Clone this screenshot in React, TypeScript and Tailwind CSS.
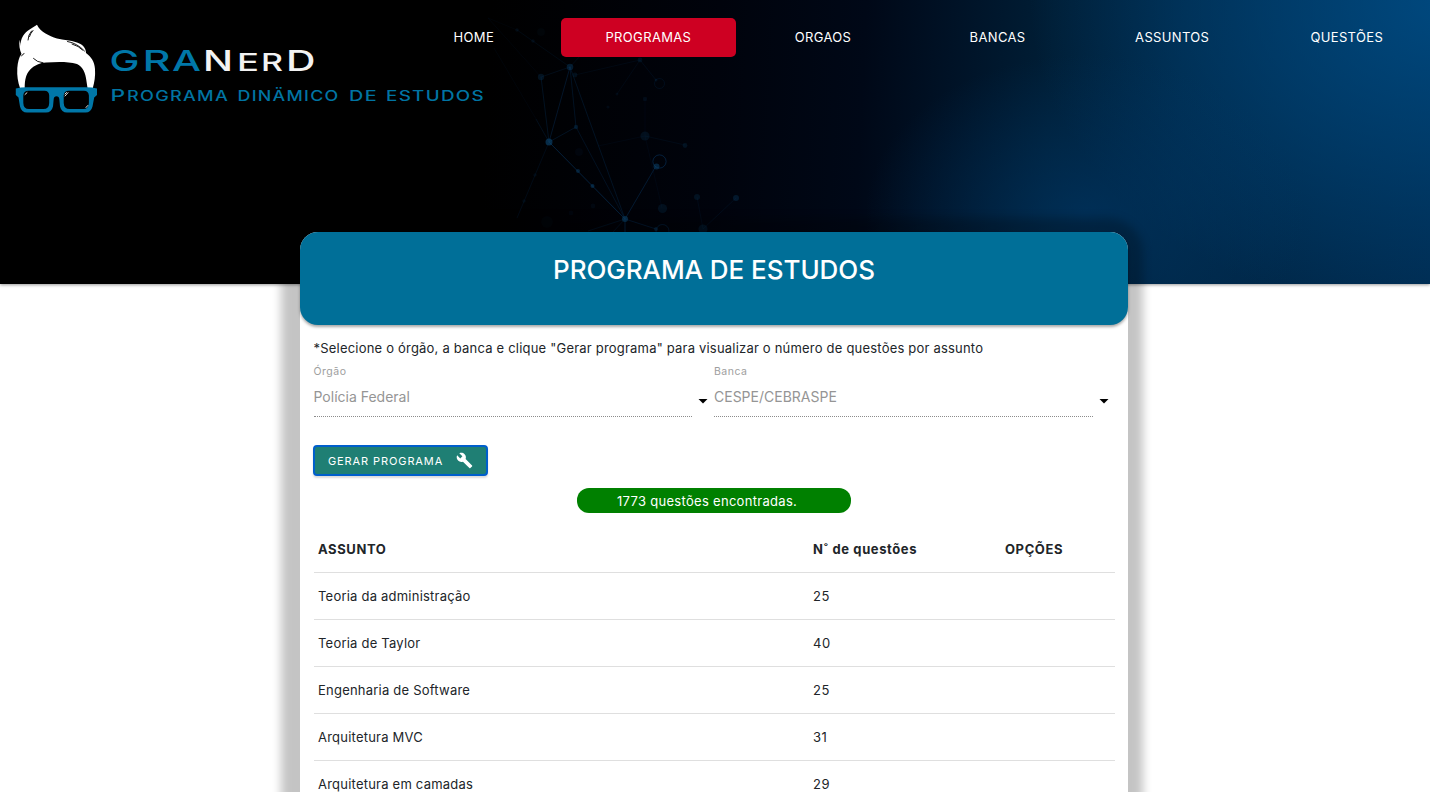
import React from 'react';

const navItems = ['HOME', 'PROGRAMAS', 'ORGAOS', 'BANCAS', 'ASSUNTOS', 'QUESTÕES'];

const subjects = [
  { name: 'Teoria da administração', count: 25 },
  { name: 'Teoria de Taylor', count: 40 },
  { name: 'Engenharia de Software', count: 25 },
  { name: 'Arquitetura MVC', count: 31 },
  { name: 'Arquitetura em camadas', count: 29 },
];

type Node = [x: number, y: number, r: number, opacity: number];
type Edge = [x1: number, y1: number, x2: number, y2: number, opacity: number];

const nodes: Node[] = [
  [570, 67, 3.3, 0.6],
  [541, 77, 3.2, 0.4],
  [575, 75, 2.4, 0.3],
  [549, 142, 3.5, 0.95],
  [576, 127, 2.2, 0.5],
  [578, 171, 2, 0.7],
  [592.5, 186, 2, 0.8],
  [625, 219, 3, 0.95],
  [656.5, 166.5, 3, 0.8],
  [645, 136, 4.6, 0.3],
  [645, 99, 2.2, 0.25],
  [685, 145.5, 2.4, 0.35],
  [662.5, 208.5, 4.6, 0.3],
  [697, 197, 3, 0.35],
  [736, 198, 3, 0.5],
  [703, 229, 4.6, 0.35],
  [656, 229, 2, 0.6],
  [640, 60, 2.4, 0.3],
  [656, 80, 1.5, 0.3],
  [608, 107, 1.6, 0.2],
  [517, 30, 1.8, 0.25],
  [533, 41, 1.8, 0.25],
  [541, 32, 4, 0.1],
  [535, 175, 1.8, 0.2],
  [524, 201, 1.8, 0.2],
  [579, 152, 4, 0.12],
  [593, 206, 2.4, 0.15],
  [571, 213, 2.4, 0.12],
  [547, 222, 6, 0.08],
  [617, 94, 1.5, 0.2],
];

const edges: Edge[] = [
  [517, 30, 570, 67, 0.25],
  [488, 18, 517, 30, 0.12],
  [488, 18, 541, 77, 0.15],
  [541, 77, 570, 67, 0.35],
  [541, 77, 549, 142, 0.5],
  [570, 67, 549, 142, 0.6],
  [570, 67, 576, 127, 0.5],
  [570, 67, 625, 219, 0.5],
  [549, 142, 576, 127, 0.5],
  [576, 127, 625, 219, 0.45],
  [549, 142, 625, 219, 0.9],
  [625, 219, 656, 166, 0.7],
  [625, 219, 656, 229, 0.6],
  [625, 219, 588, 231, 0.4],
  [625, 219, 613, 232, 0.4],
  [625, 219, 625, 234, 0.9],
  [549, 142, 517, 218, 0.3],
  [549, 142, 536, 119, 0.4],
  [536, 119, 494, 48, 0.15],
  [575, 75, 640, 60, 0.2],
  [640, 60, 656, 80, 0.25],
  [640, 60, 617, 94, 0.2],
  [645, 99, 645, 136, 0.15],
  [645, 136, 685, 145, 0.22],
  [645, 136, 598, 146, 0.15],
  [645, 136, 662, 208, 0.15],
  [697, 197, 703, 229, 0.2],
  [736, 198, 703, 229, 0.25],
  [570, 67, 580, 56, 0.25],
];

function NetworkArt() {
  return (
    <svg className="absolute left-0 top-0" width="1430" height="284" viewBox="0 0 1430 284" aria-hidden="true">
      <g stroke="#073765" strokeWidth="1" fill="none">
        {edges.map(([x1, y1, x2, y2, o], i) => (
          <line key={i} x1={x1} y1={y1} x2={x2} y2={y2} opacity={o * 0.62} />
        ))}
        <circle cx="659.5" cy="161.5" r="6.6" opacity="0.55" />
        <circle cx="659.5" cy="83.5" r="5" opacity="0.2" />
        <circle cx="662.5" cy="231" r="6.5" opacity="0.4" />
      </g>
      <g fill="#0a4068">
        {nodes.map(([x, y, r, o], i) => (
          <circle key={i} cx={x} cy={y} r={r} opacity={o * 0.7} />
        ))}
      </g>
    </svg>
  );
}

function Logo() {
  return (
    <svg className="block shrink-0" width="500" height="130" viewBox="0 0 500 130" role="img" aria-label="GRANerD">
      <path
        fill="#fff"
        d="M37 24.800C32 28 26 31 23 36C21 39.500 20.300 43 20.500 46L19.700 39.500C18.700 45 19.700 50 21.500 54C19 57 17.800 62 17.300 68C16.800 76 18 82 20 88H24.700C24.700 80 26 74 30 69.800C35 65 40 63 46 62.600C56 62 68 61.500 77 64C83 67 85.500 73 86.300 80L87.500 88H92.800C94.500 82 95.500 76 95 69C94.500 61 91 57 86 53C86 47.500 82 44 77 42.500C70 40 64 40.500 57 38.500C49 36.200 40 31.500 37 24.800Z"
      />
      <path
        fill="none"
        stroke="#000"
        strokeWidth="0.9"
        strokeLinecap="round"
        d="M31.500 31Q28 35 28 40M33 30.500Q30 34 29.500 36.500M67.500 41.500Q77 43 84.500 51M72 44Q79 46 82.500 50M33.500 58.500Q37 62.300 43 62.800M21.500 56Q23 53.500 24 53.500"
      />
      <path
        fill="#0077a8"
        fillRule="evenodd"
        d="M15.800 88.500Q22 86.800 30 87.300H82Q91 86.800 97 88.500V95L94.200 97.500L92.500 106.500Q91 112.500 85.500 112.500H67Q61.500 112.500 60 106.500L59.300 99Q59 96.300 56.500 96.300T53.700 99L53 106.500Q51.500 112.500 46 112.500H27Q21.500 112.500 20 106.500L18.500 97.500L15.800 95ZM28.500 90.700Q23.500 90.700 23.300 95.500V103Q23.500 109 29 109H43.500Q49 109 49.200 103V95.500Q49 90.700 44.500 90.700ZM69 90.700Q64 90.700 63.700 95.500V103Q64 109 69.500 109H83.500Q88.500 109 88.900 103V95.500Q88.500 90.700 84 90.700Z"
      />
      <path
        fill="none"
        stroke="#fff"
        strokeWidth="0.9"
        strokeLinecap="round"
        d="M25 94.500L27 92.700M65 96L68 92.700M65 94L66.500 92.500M86 107.500L87.800 105.500"
      />
      <g className="font-['Inter',sans-serif]">
        <g fill="#0077a8" fontSize="29" fontWeight="500">
          <text x="109.500" y="70.800" textLength="30" lengthAdjust="spacingAndGlyphs">G</text>
          <text x="142.500" y="70.800" textLength="28" lengthAdjust="spacingAndGlyphs">R</text>
          <text x="172" y="70.800" textLength="29" lengthAdjust="spacingAndGlyphs">A</text>
        </g>
        <g fill="#f2f2f2" fontWeight="500">
          <text x="203" y="70.800" fontSize="29" textLength="30" lengthAdjust="spacingAndGlyphs">N</text>
          <text x="237" y="70.800" fontSize="24" textLength="22" lengthAdjust="spacingAndGlyphs">E</text>
          <text x="261" y="70.800" fontSize="24" textLength="22" lengthAdjust="spacingAndGlyphs">R</text>
          <text x="286" y="70.800" fontSize="29" textLength="29.500" lengthAdjust="spacingAndGlyphs">D</text>
        </g>
        <g fill="#0074a3" fontWeight="500" letterSpacing="1">
          <text x="110.500" y="101" fontSize="16.500" textLength="16" lengthAdjust="spacingAndGlyphs">P</text>
          <text x="127" y="101" fontSize="14" textLength="102" lengthAdjust="spacingAndGlyphs">ROGRAMA</text>
          <text x="237.500" y="101" fontSize="14" textLength="102" lengthAdjust="spacingAndGlyphs">DINÄMICO</text>
          <text x="349" y="101" fontSize="14" textLength="29" lengthAdjust="spacingAndGlyphs">DE</text>
          <text x="386" y="101" fontSize="14" textLength="99" lengthAdjust="spacingAndGlyphs">ESTUDOS</text>
        </g>
      </g>
    </svg>
  );
}

function SelectField({ label, value }: { label: string; value: string }) {
  return (
    <div className="flex w-[400.500px] items-start">
      <div className="w-[378.500px] shrink-0 border-b border-dotted border-[#8c8c8c]">
        <div className="h-[15px] text-[10.500px] leading-[15px] tracking-[0.500px] text-[#9e9e9e]">{label}</div>
        <div className="h-[37px] text-[14px] leading-[35px] text-[#959595]">{value}</div>
      </div>
      <svg className="ml-[6px] mt-[34.500px] block" width="10" height="5" viewBox="0 0 10 5" aria-hidden="true">
        <path d="M0.500 0H9.500L5 4.600Z" fill="#000" />
      </svg>
    </div>
  );
}

export default function App() {
  return (
    <div className="h-[792px] w-[1430px] overflow-hidden bg-white font-['Inter',sans-serif] text-[#212529]">
      <header className="relative h-[284px] bg-black bg-[radial-gradient(ellipse_220px_160px_at_1085px_215px,rgba(0,56,104,0.6),transparent),radial-gradient(ellipse_420px_320px_at_1450px_0px,rgba(0,78,135,0.85),transparent),linear-gradient(93deg,#000_0%,#000_34%,#00030c_50%,#000817_60%,#001226_66%,#001e36_73%,#002645_82%,#002b50_100%)] shadow-[0_1px_3px_rgba(0,0,0,0.4)]">
        <NetworkArt />
        <div className="relative flex h-full">
          <Logo />
          <nav className="-ml-[113.500px] flex h-[39px] pt-[18px]">
            {navItems.map((item) => (
              <a
                key={item}
                className={
                  item === 'PROGRAMAS'
                    ? 'flex h-[39px] w-[174.600px] shrink-0 items-center justify-center rounded-[5px] bg-[#ce0022] text-[13px] tracking-[0.350px] text-white'
                    : 'flex h-[39px] w-[174.600px] shrink-0 items-center justify-center text-[13px] tracking-[0.350px] text-white'
                }
              >
                {item}
              </a>
            ))}
          </nav>
        </div>
      </header>

      <main className="relative -mt-[52px] ml-[300px] h-[620px] w-[828px] rounded-[18px] bg-white shadow-[-2px_3px_10px_17px_rgba(0,0,0,0.23)]">
        <div className="h-[93px] rounded-[18px] bg-[#006f98] pt-[18px] text-center shadow-[0_2px_3px_rgba(0,0,0,0.35)]">
          <h1 className="text-[26px] font-[450] leading-[40px] tracking-[-0.050px] text-white">PROGRAMA DE ESTUDOS</h1>
        </div>

        <div className="pl-[13.500px] pr-[13px]">
          <p className="mt-[13px] h-[20px] text-[13px] leading-[20px] tracking-[0.203px]">
            *Selecione o órgão, a banca e clique "Gerar programa" para visualizar o número de questões por assunto
          </p>

          <div className="mt-[6px] flex">
            <SelectField label="Órgão" value="Polícia Federal" />
            <SelectField label="Banca" value="CESPE/CEBRASPE" />
          </div>

          <button className="-ml-[0.500px] mt-[28px] flex h-[31px] w-[175px] items-center rounded-[4px] border-2 border-[#005fcc] bg-[#1f7f74] pl-[13px] text-[11px] tracking-[0.900px] text-white shadow-[0_2px_2px_rgba(0,0,0,0.14)]">
            <span className="pt-[2px]">GERAR PROGRAMA</span>
            <svg className="ml-[13px]" width="17" height="17" viewBox="0 0 24 24" fill="#fff" aria-hidden="true">
              <path d="M22.700 19l-9.100-9.100c.9-2.300.4-5-1.500-6.900-2-2-5-2.400-7.400-1.300L9 6 6 9 1.600 4.700C.4 7.100.9 10.100 2.900 12.100c1.900 1.900 4.600 2.400 6.900 1.500l9.100 9.100c.4.4 1 .4 1.400 0l2.300-2.300c.5-.4.5-1.100.1-1.400z" />
            </svg>
          </button>

          <div className="ml-[263.500px] mt-[12px] h-[25px] w-[274px] rounded-[12px] bg-[#008000] pl-[40px] text-[13px] leading-[27px] tracking-[0.300px] text-white">
            1773 questões encontradas.
          </div>

          <table className="ml-[0.500px] mt-[12px] w-[801px] table-fixed border-collapse text-left text-[13px] leading-[20px]">
            <thead>
              <tr className="h-[47px] border-b border-[#dfdfdf] tracking-[0.600px]">
                <th className="w-[495px] pl-[4px] pt-px font-bold">ASSUNTO</th>
                <th className="w-[192px] pl-[4px] pt-px font-bold">N˚ de questões</th>
                <th className="pl-[4px] pt-px font-bold">OPÇÕES</th>
              </tr>
            </thead>
            <tbody>
              {subjects.map((s) => (
                <tr key={s.name} className="h-[47px] border-b border-[#dfdfdf]">
                  <td className="pl-[4px] tracking-[0.220px]">{s.name}</td>
                  <td className="pl-[4px] tracking-[0.500px]">{s.count}</td>
                  <td />
                </tr>
              ))}
            </tbody>
          </table>
        </div>
      </main>
    </div>
  );
}
